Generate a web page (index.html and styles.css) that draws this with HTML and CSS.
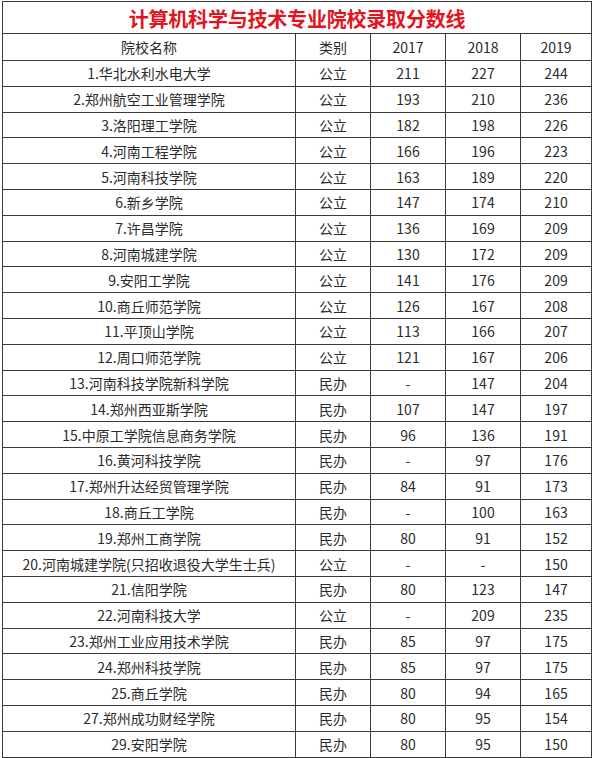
FILE: index.html
```html
<!DOCTYPE html>
<html lang="zh-CN">
<head>
<meta charset="utf-8">
<title>计算机科学与技术专业院校录取分数线</title>
<link rel="stylesheet" href="styles.css">
</head>
<body>
<table class="score-table">
  <colgroup>
    <col class="c-name"><col class="c-type"><col class="c-year"><col class="c-year"><col class="c-last">
  </colgroup>
  <thead>
    <tr class="title-row"><th colspan="5">计算机科学与技术专业院校录取分数线</th></tr>
    <tr class="head-row"><th>院校名称</th><th>类别</th><th>2017</th><th>2018</th><th>2019</th></tr>
  </thead>
  <tbody>
    <tr><td>1.华北水利水电大学</td><td>公立</td><td>211</td><td>227</td><td>244</td></tr>
    <tr><td>2.郑州航空工业管理学院</td><td>公立</td><td>193</td><td>210</td><td>236</td></tr>
    <tr><td>3.洛阳理工学院</td><td>公立</td><td>182</td><td>198</td><td>226</td></tr>
    <tr><td>4.河南工程学院</td><td>公立</td><td>166</td><td>196</td><td>223</td></tr>
    <tr><td>5.河南科技学院</td><td>公立</td><td>163</td><td>189</td><td>220</td></tr>
    <tr><td>6.新乡学院</td><td>公立</td><td>147</td><td>174</td><td>210</td></tr>
    <tr><td>7.许昌学院</td><td>公立</td><td>136</td><td>169</td><td>209</td></tr>
    <tr><td>8.河南城建学院</td><td>公立</td><td>130</td><td>172</td><td>209</td></tr>
    <tr><td>9.安阳工学院</td><td>公立</td><td>141</td><td>176</td><td>209</td></tr>
    <tr><td>10.商丘师范学院</td><td>公立</td><td>126</td><td>167</td><td>208</td></tr>
    <tr><td>11.平顶山学院</td><td>公立</td><td>113</td><td>166</td><td>207</td></tr>
    <tr><td>12.周口师范学院</td><td>公立</td><td>121</td><td>167</td><td>206</td></tr>
    <tr><td>13.河南科技学院新科学院</td><td>民办</td><td>-</td><td>147</td><td>204</td></tr>
    <tr><td>14.郑州西亚斯学院</td><td>民办</td><td>107</td><td>147</td><td>197</td></tr>
    <tr><td>15.中原工学院信息商务学院</td><td>民办</td><td>96</td><td>136</td><td>191</td></tr>
    <tr><td>16.黄河科技学院</td><td>民办</td><td>-</td><td>97</td><td>176</td></tr>
    <tr><td>17.郑州升达经贸管理学院</td><td>民办</td><td>84</td><td>91</td><td>173</td></tr>
    <tr><td>18.商丘工学院</td><td>民办</td><td>-</td><td>100</td><td>163</td></tr>
    <tr><td>19.郑州工商学院</td><td>民办</td><td>80</td><td>91</td><td>152</td></tr>
    <tr><td>20.河南城建学院(只招收退役大学生士兵)</td><td>公立</td><td>-</td><td>-</td><td>150</td></tr>
    <tr><td>21.信阳学院</td><td>民办</td><td>80</td><td>123</td><td>147</td></tr>
    <tr><td>22.河南科技大学</td><td>公立</td><td>-</td><td>209</td><td>235</td></tr>
    <tr><td>23.郑州工业应用技术学院</td><td>民办</td><td>85</td><td>97</td><td>175</td></tr>
    <tr><td>24.郑州科技学院</td><td>民办</td><td>85</td><td>97</td><td>175</td></tr>
    <tr><td>25.商丘学院</td><td>民办</td><td>80</td><td>94</td><td>165</td></tr>
    <tr><td>27.郑州成功财经学院</td><td>民办</td><td>80</td><td>95</td><td>154</td></tr>
    <tr><td>29.安阳学院</td><td>民办</td><td>80</td><td>95</td><td>150</td></tr>
  </tbody>
</table>
</body>
</html>
```

FILE: styles.css
```css
html, body {
  margin: 0;
  padding: 0;
  background: #ffffff;
}

body {
  padding: 1px 0 0 2px;
  font-family: "Noto Sans CJK SC", "Noto Sans", sans-serif;
  color: #2b2b2b;
}

.score-table {
  border-collapse: collapse;
  table-layout: fixed;
  width: 590px;
  font-size: 14px;
}

.c-name { width: 293px; }
.c-type { width: 75px; }
.c-year { width: 75px; }
.c-last { width: 71px; }

.score-table th,
.score-table td {
  border: 1.2px solid #3a3a3a;
  padding: 0;
  text-align: center;
  vertical-align: middle;
  font-weight: normal;
  white-space: nowrap;
  line-height: 1;
}

.title-row th {
  height: 32px;
  color: #e3141d;
  font-weight: bold;
  font-size: 20px;
  letter-spacing: -0.2px;
  padding-top: 3px;
  box-sizing: border-box;
}

.head-row th {
  height: 26px;
}

.score-table tbody tr {
  height: 25.8px;
}
.score-table tbody td {
  height: 25.8px;
  box-sizing: border-box;
}
```
